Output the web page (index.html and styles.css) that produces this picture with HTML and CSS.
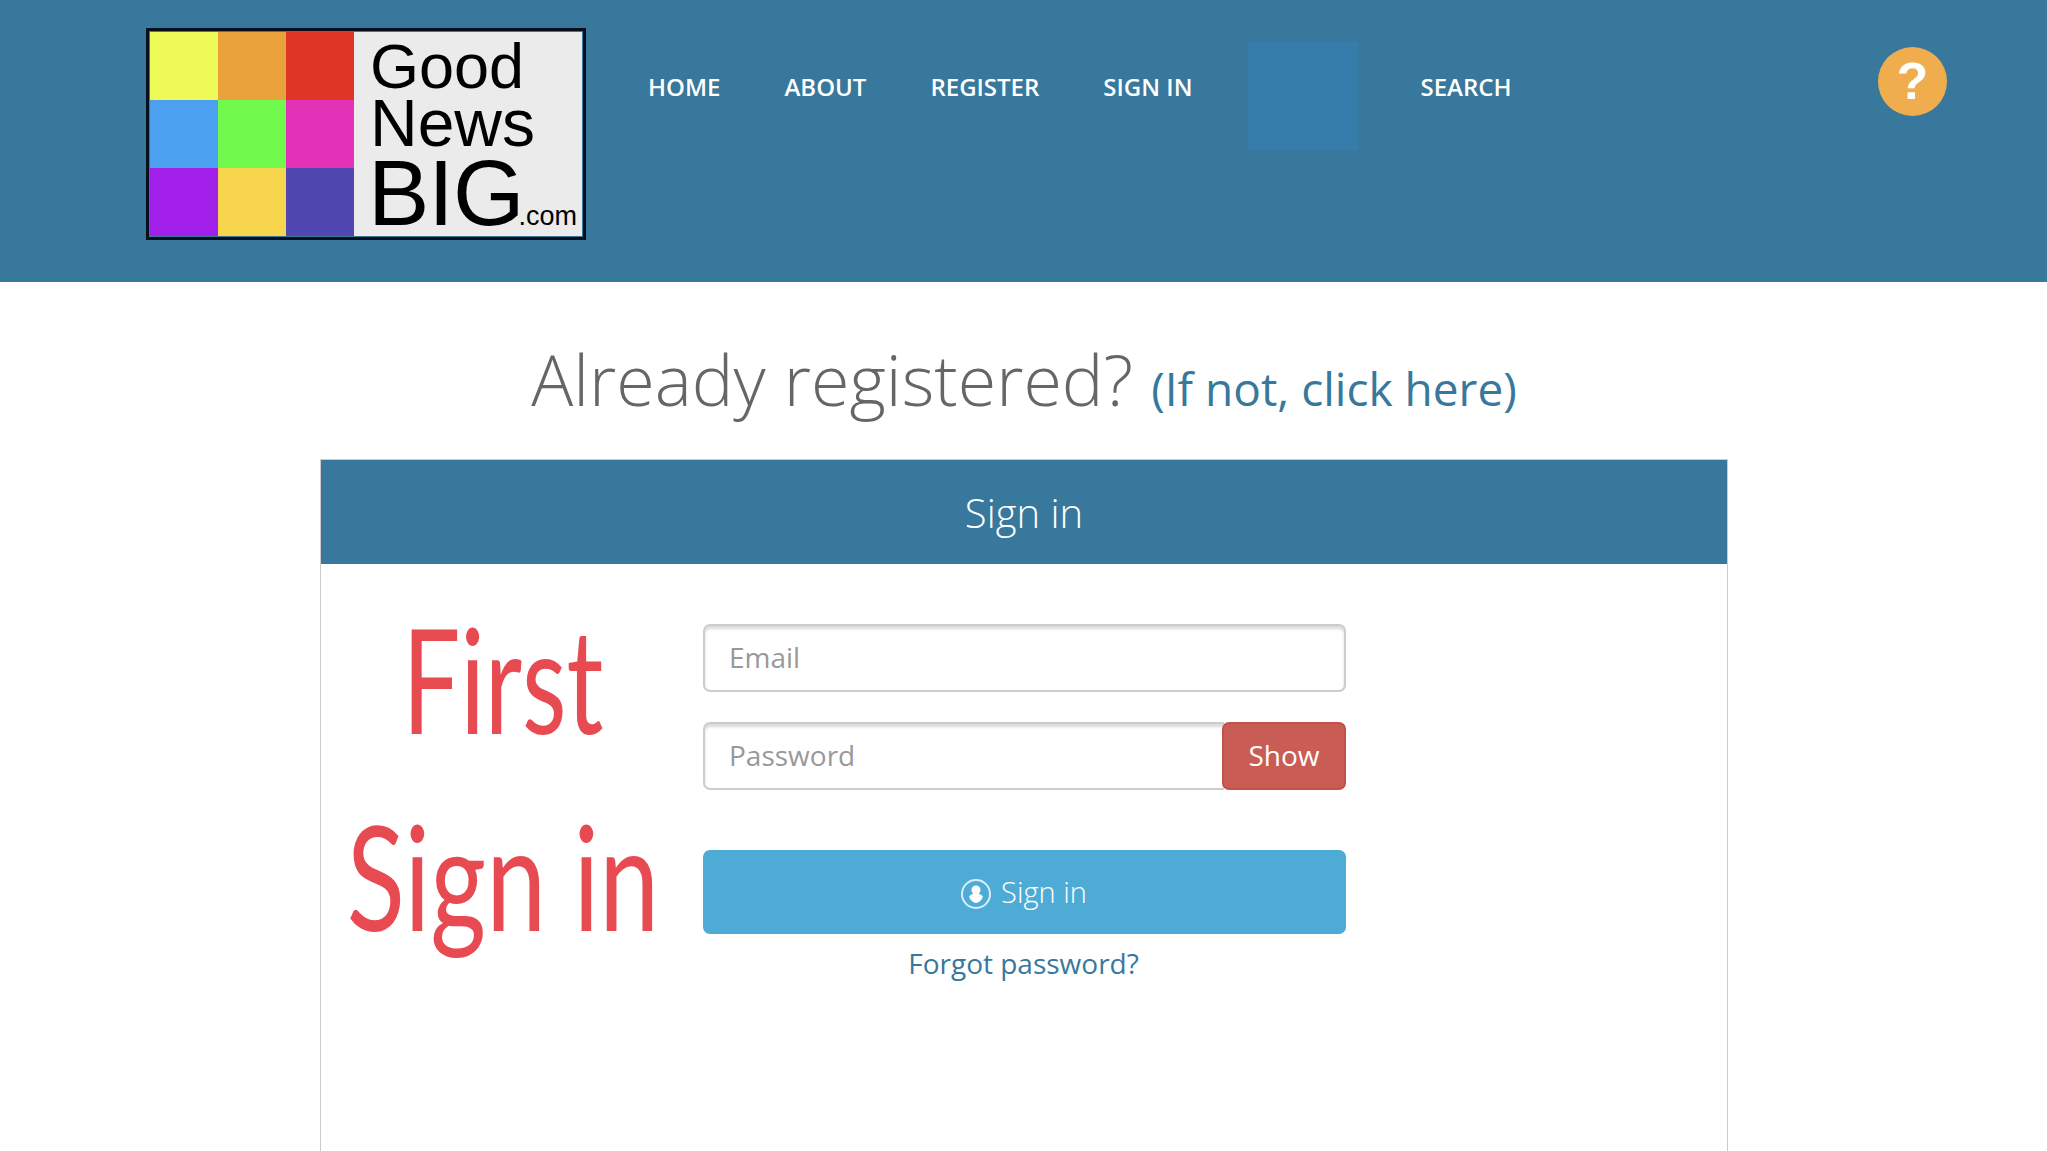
FILE: index.html
```html
<!DOCTYPE html>
<html lang="en">
<head>
    <meta charset="UTF-8">
    <title>Good News BIG</title>
    <link rel="stylesheet" href="styles.css">
</head>
<body>
    <header class="top-bar">
        <a class="logo" href="#">
            <div class="logo-squares">
                <span class="sq-yellow"></span><span class="sq-orange"></span><span class="sq-red"></span>
                <span class="sq-blue"></span><span class="sq-green"></span><span class="sq-pink"></span>
                <span class="sq-purple"></span><span class="sq-gold"></span><span class="sq-indigo"></span>
            </div>
            <div class="logo-text">
                <div class="logo-good">Good</div>
                <div class="logo-news">News</div>
                <div class="logo-big">BIG<span class="logo-com">.com</span></div>
            </div>
        </a>
        <nav class="main-nav">
            <a href="#">HOME</a>
            <a href="#">ABOUT</a>
            <a href="#">REGISTER</a>
            <a href="#">SIGN IN</a>
            <div class="nav-blank"></div>
            <a href="#">SEARCH</a>
        </nav>
        <a class="help" href="#">?</a>
    </header>

    <main class="content">
        <h1>Already registered? <a href="#">(If not, click here)</a></h1>

        <section class="panel">
            <div class="panel-head">Sign in</div>
            <div class="panel-body">
                <div class="scrawl">
                    <div class="scrawl-first">First</div>
                    <div class="scrawl-sign">Sign in</div>
                </div>
                <form class="signin-form">
                    <input class="field" type="text" placeholder="Email">
                    <div class="password-row">
                        <input class="field" type="password" placeholder="Password">
                        <button class="show-btn" type="button">Show</button>
                    </div>
                    <button class="signin-btn" type="button">
                        <svg class="signin-icon" width="32" height="32" viewBox="0 0 32 32">
                            <circle cx="16" cy="16" r="14" fill="none" stroke="#d8eef8" stroke-width="2"/>
                            <circle cx="16" cy="12" r="4.5" fill="#fff"/>
                            <path d="M9 18.500c2-2.500 4.500-3 7-3s5 .5 7 3c-1 3-3.500 6-7 6.500c-3.500-.5-6-3.500-7-6.500z" fill="#fff"/>
                        </svg>
                        Sign in
                    </button>
                    <a class="forgot" href="#">Forgot password?</a>
                </form>
            </div>
        </section>
    </main>
</body>
</html>
```

FILE: styles.css
```css
* {
    box-sizing: border-box;
}

html, body {
    height: 1151px;
    overflow: hidden;
}

body {
    margin: 0;
    font-family: "Open Sans", Arial, sans-serif;
    background: #fff;
    color: #666;
}

a {
    text-decoration: none;
}

.top-bar {
    height: 282px;
    background: #38789c;
    padding: 28px 100px 0 146px;
    display: flex;
    align-items: flex-start;
}

/* logo */
.logo {
    width: 440px;
    height: 212px;
    flex: none;
    display: flex;
    border: 3px solid #05101c;
    padding: 1px;
    background: #38789c;
}

.logo-squares {
    display: grid;
    grid-template-columns: repeat(3, 68px);
    grid-template-rows: repeat(3, 68px);
    flex: none;
}

.sq-yellow { background: #edfa57; }
.sq-orange { background: #eaa33c; }
.sq-red { background: #df3527; }
.sq-blue { background: #4ba1ef; }
.sq-green { background: #72f94e; }
.sq-pink { background: #e331b8; }
.sq-purple { background: #a21fe9; }
.sq-gold { background: #f7d54d; }
.sq-indigo { background: #5047b1; }

.logo-text {
    flex: 1;
    background: #ebebeb;
    color: #000;
    font-family: "Liberation Sans", Arial, sans-serif;
    padding: 7px 0 0 16px;
    white-space: nowrap;
}

.logo-good {
    font-size: 63px;
    line-height: 55px;
}

.logo-news {
    font-size: 66px;
    line-height: 58px;
}

.logo-big {
    font-size: 92px;
    line-height: 82px;
    letter-spacing: -1px;
    margin-left: -2px;
}

.logo-com {
    font-size: 27px;
    letter-spacing: 0;
    margin-left: -5px;
}

/* nav */
.main-nav {
    display: flex;
    align-items: flex-start;
    margin-left: 62px;
    gap: 64px;
}

.main-nav a {
    color: #fff;
    font-size: 24px;
    font-weight: 600;
    line-height: 32px;
    margin-top: 43px;
}

.nav-blank {
    width: 110px;
    height: 108px;
    background: #377dab;
    margin: 14px -2px 0 -8px;
}

.help {
    width: 69px;
    height: 69px;
    margin: 19px 0 0 auto;
    border-radius: 50%;
    background: #f0ad4e;
    color: #fff;
    font-family: "Liberation Sans", Arial, sans-serif;
    font-size: 52px;
    font-weight: 700;
    line-height: 69px;
    text-align: center;
}

/* main */
.content {
    width: 1408px;
    margin-left: 320px;
}

h1 {
    margin: 0;
    padding-top: 57px;
    height: 177px;
    font-size: 70px;
    font-weight: 300;
    line-height: 80px;
    text-align: center;
    white-space: nowrap;
}

h1 a {
    color: #38789c;
    font-size: 46px;
    font-weight: 400;
}

.panel {
    border: 1px solid #ccc;
    border-bottom: 0;
    height: 700px;
}

.panel-head {
    height: 104px;
    background: #38789c;
    color: #fff;
    font-size: 40px;
    font-weight: 300;
    line-height: 106px;
    text-align: center;
}

.panel-body {
    display: flex;
    padding: 60px 0 0 0;
}

.scrawl {
    width: 382px;
    flex: none;
    display: flex;
    flex-direction: column;
    align-items: center;
    padding-right: 18px;
    color: #e84a52;
    font-family: "Lato", sans-serif;
    font-weight: 400;
    margin-top: -10px;
}

.scrawl-first {
    font-size: 145px;
    line-height: 128px;
    transform: scaleX(.71);
}

.scrawl-sign {
    font-size: 145px;
    line-height: 130px;
    margin-top: 68px;
    white-space: nowrap;
    transform: scaleX(.74);
}

.signin-form {
    width: 643px;
    display: flex;
    flex-direction: column;
}

.field {
    display: block;
    width: 100%;
    height: 68px;
    padding: 0 0 2px 24px;
    border: 2px solid #ccc;
    border-radius: 7px;
    box-shadow: inset 0 3px 3px rgba(0,0,0,.15);
    font-family: inherit;
    font-size: 28px;
    color: #555;
    background: #fff;
}

.field::placeholder {
    color: #999;
    opacity: 1;
}

.password-row {
    display: flex;
    margin-top: 30px;
}

.password-row .field {
    flex: 1;
    min-width: 0;
    border-right: 0;
    border-radius: 7px 0 0 7px;
}

.show-btn {
    width: 124px;
    flex: none;
    margin-left: -2px;
    height: 68px;
    padding: 0 0 2px;
    background: #c95c55;
    border: 2px solid #c4504a;
    border-radius: 7px;
    color: #fff;
    font-family: inherit;
    font-size: 28px;
}

.signin-btn {
    margin-top: 60px;
    height: 84px;
    padding: 0 2px 2px 0;
    background: #4eabd6;
    border: 0;
    border-radius: 7px;
    color: #fff;
    font-family: inherit;
    font-size: 29px;
    font-weight: 300;
    display: flex;
    align-items: center;
    justify-content: center;
    gap: 9px;
}

.signin-icon {
    margin-top: 6px;
}

.forgot {
    margin-top: 9px;
    padding-right: 2px;
    color: #38789c;
    font-size: 28px;
    line-height: 40px;
    text-align: center;
}
```
